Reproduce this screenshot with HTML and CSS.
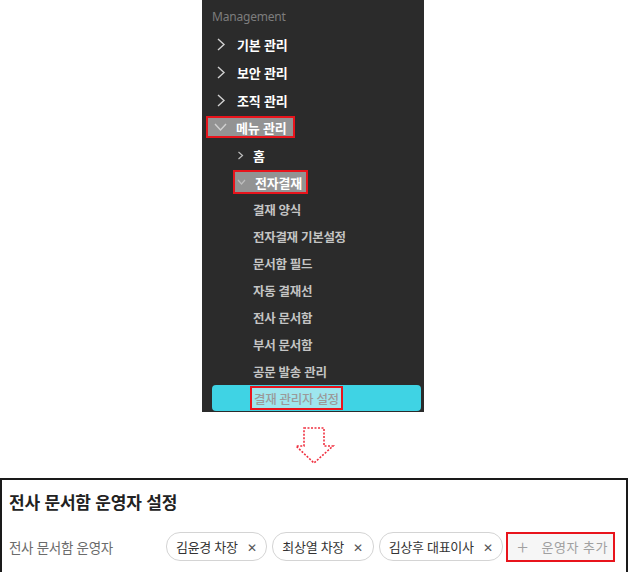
FILE: index.html
```html
<!DOCTYPE html>
<html lang="ko">
<head>
  <meta charset="UTF-8">
  <title>전사 문서함 운영자 설정</title>
  <link rel="stylesheet" href="styles.css">
</head>
<body>
  <div class="top">
    <nav class="sidebar">
      <div class="group-title">Management</div>
      <ul class="menu">
        <li class="item">
          <span class="row"><svg class="chev" width="10" height="13" viewBox="0 0 10 13"><path d="M2 1 L8 6.5 L2 12"/></svg>기본 관리</span>
        </li>
        <li class="item">
          <span class="row"><svg class="chev" width="10" height="13" viewBox="0 0 10 13"><path d="M2 1 L8 6.5 L2 12"/></svg>보안 관리</span>
        </li>
        <li class="item">
          <span class="row"><svg class="chev" width="10" height="13" viewBox="0 0 10 13"><path d="M2 1 L8 6.5 L2 12"/></svg>조직 관리</span>
        </li>
        <li class="item open">
          <span class="row mark"><svg class="chev down" width="13" height="8" viewBox="0 0 13 8"><path d="M1 1 L6.5 7 L12 1"/></svg>메뉴 관리</span>
          <ul class="sub">
            <li class="sub-item">
              <span class="row"><svg class="chev small" width="7" height="9" viewBox="0 0 7 9"><path d="M1.5 1 L5.5 4.5 L1.5 8"/></svg>홈</span>
            </li>
            <li class="sub-item open">
              <span class="row mark"><svg class="chev small down" width="9" height="6" viewBox="0 0 9 6"><path d="M1 1 L4.5 5 L8 1"/></svg>전자결재</span>
              <ul class="leaves">
                <li class="leaf">결재 양식</li>
                <li class="leaf">전자결재 기본설정</li>
                <li class="leaf">문서함 필드</li>
                <li class="leaf">자동 결재선</li>
                <li class="leaf">전사 문서함</li>
                <li class="leaf">부서 문서함</li>
                <li class="leaf">공문 발송 관리</li>
                <li class="leaf active"><span class="leaf-mark">결재 관리자 설정</span></li>
              </ul>
            </li>
          </ul>
        </li>
      </ul>
    </nav>
  </div>

  <div class="arrow">
    <svg width="42" height="40" viewBox="0 0 42 40">
      <path d="M9 1 H29 V19 H38 L19 36 L1 19 H9 Z"/>
    </svg>
  </div>

  <section class="panel">
    <h3 class="panel-title">전사 문서함 운영자 설정</h3>
    <div class="field">
      <span class="field-label">전사 문서함 운영자</span>
      <div class="chips">
        <span class="chip">김윤경 차장<span class="chip-x">✕</span></span>
        <span class="chip">최상열 차장<span class="chip-x">✕</span></span>
        <span class="chip">김상후 대표이사<span class="chip-x">✕</span></span>
        <span class="add-btn"><span class="plus">+</span>운영자 추가</span>
      </div>
    </div>
  </section>
</body>
</html>
```

FILE: styles.css
```css
body {
  margin: 0;
  background: #fff;
  font-family: "Noto Sans CJK KR", "Noto Sans", sans-serif;
}
.top {
  display: flex;
}
.sidebar {
  width: 222px;
  height: 412px;
  margin-left: 202px;
  background: #2b2b2b;
  overflow: hidden;
}
.group-title {
  font-family: "Noto Sans", sans-serif;
  font-size: 12px;
  color: #7d7d7d;
  line-height: 20px;
  padding: 7px 0 3px 10px;
  letter-spacing: -0.2px;
}
ul {
  list-style: none;
  margin: 0;
  padding: 0;
}
.item > .row {
  height: 28px;
  padding-left: 14px;
}
.row {
  display: flex;
  align-items: center;
  gap: 11px;
  font-size: 13px;
  font-weight: 700;
  color: #fff;
  letter-spacing: -0.2px;
}
.chev {
  fill: none;
  stroke: #d0d0d0;
  stroke-width: 1.4;
  flex-shrink: 0;
}
.item.open > .row {
  height: 28px;
  padding-left: 0;
}
.row.mark {
  width: fit-content;
}
.item.open > .row.mark {
  margin-left: 6px;
  height: 18px;
  margin-top: 4px;
  margin-bottom: 6px;
  padding: 0 7px 0 6px;
  background: #939393;
  outline: 2px solid #e8141c;
  gap: 9px;
}
.sub-item > .row {
  height: 27px;
  padding-left: 35px;
  gap: 9px;
}
.sub-item.open > .row.mark {
  height: 20px;
  margin: 3px 0 4px 33px;
  padding: 0 4px 0 2px;
  background: #939393;
  outline: 2px solid #e8141c;
  gap: 9px;
}
.chev.small {
  stroke: #bdbdbd;
  stroke-width: 1.2;
}
.leaf {
  height: 27px;
  display: flex;
  align-items: center;
  padding-left: 51px;
  font-size: 12.5px;
  font-weight: 700;
  color: #c4c4c4;
  letter-spacing: -0.3px;
}
.leaf.active {
  height: 26px;
  margin: 0 3px 0 10px;
  padding-left: 40px;
  background: #3fd3e4;
  border-radius: 4px;
}
.leaf-mark {
  display: flex;
  align-items: center;
  height: 20px;
  padding: 0 2px;
  background: #9ee6ee;
  color: #9a9a9a;
  font-weight: 500;
  outline: 2px solid #e8141c;
}
.arrow {
  display: flex;
  justify-content: center;
  padding: 15px 0 11px 4px;
  height: 40px;
}
.arrow path {
  fill: none;
  stroke: #f03040;
  stroke-width: 1.6;
  stroke-dasharray: 2 1.5;
}
.panel {
  border: 2px solid #1a1a1a;
  border-bottom: none;
  height: 94px;
  box-sizing: border-box;
  padding: 10px 7px 0 7px;
}
.panel-title {
  margin: 0;
  font-size: 17px;
  font-weight: 700;
  color: #222;
  line-height: 24px;
  letter-spacing: -0.2px;
}
.field {
  display: flex;
  align-items: center;
  margin-top: 18px;
}
.field-label {
  width: 157px;
  font-size: 13.5px;
  color: #6b6b6b;
  letter-spacing: -0.3px;
}
.chips {
  display: flex;
  align-items: center;
  gap: 5px;
}
.chip {
  display: flex;
  align-items: center;
  height: 27px;
  padding: 0 10px 0 9px;
  border: 1px solid #d4d4d4;
  border-radius: 14px;
  font-size: 13px;
  color: #333;
  letter-spacing: -0.3px;
}
.chip-x {
  margin-left: 9px;
  font-size: 12px;
  color: #555;
}
.add-btn {
  display: flex;
  align-items: center;
  height: 26px;
  padding: 0 5px 0 9px;
  background: #f6f6f6;
  outline: 2px solid #e8141c;
  font-size: 13px;
  color: #a0a0a0;
  letter-spacing: 0.5px;
}
.plus {
  font-size: 20px;
  font-weight: 300;
  color: #a0a0a0;
  margin-right: 13px;
}
```
